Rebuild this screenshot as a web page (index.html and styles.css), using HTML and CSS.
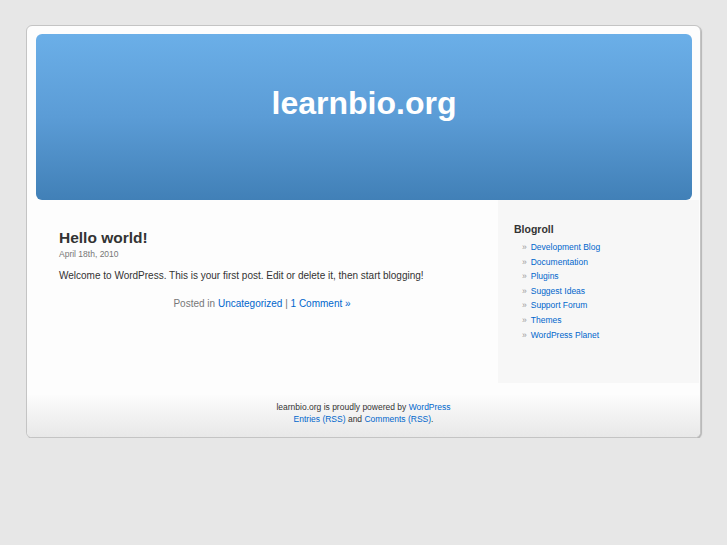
FILE: index.html
```html
<!DOCTYPE html>
<html lang="en">
<head>
  <meta charset="UTF-8">
  <title>learnbio.org</title>
  <link rel="stylesheet" href="styles.css">
</head>
<body>
  <div class="page">
    <div class="header">
      <h1><a href="#">learnbio.org</a></h1>
    </div>

    <div class="main">
      <div class="content">
        <div class="post">
          <h2><a href="#">Hello world!</a></h2>
          <small>April 18th, 2010</small>
          <p>Welcome to WordPress. This is your first post. Edit or delete it, then start blogging!</p>
          <p class="postmetadata">Posted in <a href="#">Uncategorized</a> | <a href="#">1 Comment &raquo;</a></p>
        </div>
      </div>

      <div class="sidebar">
        <h3>Blogroll</h3>
        <ul>
          <li><a href="#">Development Blog</a></li>
          <li><a href="#">Documentation</a></li>
          <li><a href="#">Plugins</a></li>
          <li><a href="#">Suggest Ideas</a></li>
          <li><a href="#">Support Forum</a></li>
          <li><a href="#">Themes</a></li>
          <li><a href="#">WordPress Planet</a></li>
        </ul>
      </div>
    </div>

    <div class="footer">
      <p>learnbio.org is proudly powered by <a href="#">WordPress</a><br>
      <a href="#">Entries (RSS)</a> and <a href="#">Comments (RSS)</a>.</p>
    </div>
  </div>
</body>
</html>
```

FILE: styles.css
```css
body {
  margin: 0;
  padding: 25px 0 0 26px;
  background: #e7e7e7;
  font-family: "Liberation Sans", Arial, sans-serif;
  color: #333;
}

a {
  color: #0066cc;
  text-decoration: none;
}

.page {
  width: 673px;
  background: #fdfdfd;
  border: 1px solid #c4c4c4;
  border-radius: 6px;
  box-shadow: 1px 1px 1px #b5b5b5;
  overflow: hidden;
}

.header {
  margin: 8px 8px 0 9px;
  height: 166px;
  border-radius: 6px;
  background: linear-gradient(#6bafe8, #5b9cd6 50%, #4180b7);
  display: flex;
  align-items: center;
  justify-content: center;
}

.header h1 {
  margin: 0 0 27px 0;
  font-size: 32px;
  font-weight: bold;
}

.header h1 a {
  color: #fff;
}

.main {
  display: flex;
  height: 183px;
}

.content {
  width: 406px;
  padding: 28px 0 0 32px;
}

.post h2 {
  margin: 0;
  font-size: 15.5px;
  line-height: 20px;
  font-weight: bold;
}

.post h2 a {
  color: #333;
}

.post small {
  display: block;
  margin-top: 1px;
  font-size: 8.5px;
  color: #777;
}

.post p {
  margin: 9px 0 0 0;
  font-size: 10px;
  line-height: 16px;
}

.post .postmetadata {
  margin-top: 12px;
  text-align: center;
  color: #777;
}

.sidebar {
  width: 201px;
  margin-left: auto;
  margin-right: 1px;
  padding: 22px 0 0 16px;
  box-sizing: border-box;
  background: #f7f7f7;
}

.sidebar h3 {
  margin: 0 0 4px 0;
  font-size: 10.5px;
  line-height: 14px;
  color: #333;
}

.sidebar ul {
  margin: 0;
  padding: 0 0 0 8px;
  list-style: none;
}

.sidebar li {
  font-size: 8.5px;
  line-height: 14.6px;
  color: #999;
}

.sidebar li::before {
  content: "\00BB";
  margin-right: 4px;
}

.footer {
  height: 42px;
  margin-top: 12px;
  background: linear-gradient(#fcfcfc, #f0f0f0 60%, #e8e8e8);
  text-align: center;
}

.footer p {
  margin: 0;
  padding-top: 6px;
  font-size: 8.5px;
  line-height: 12px;
  color: #333;
}
```
